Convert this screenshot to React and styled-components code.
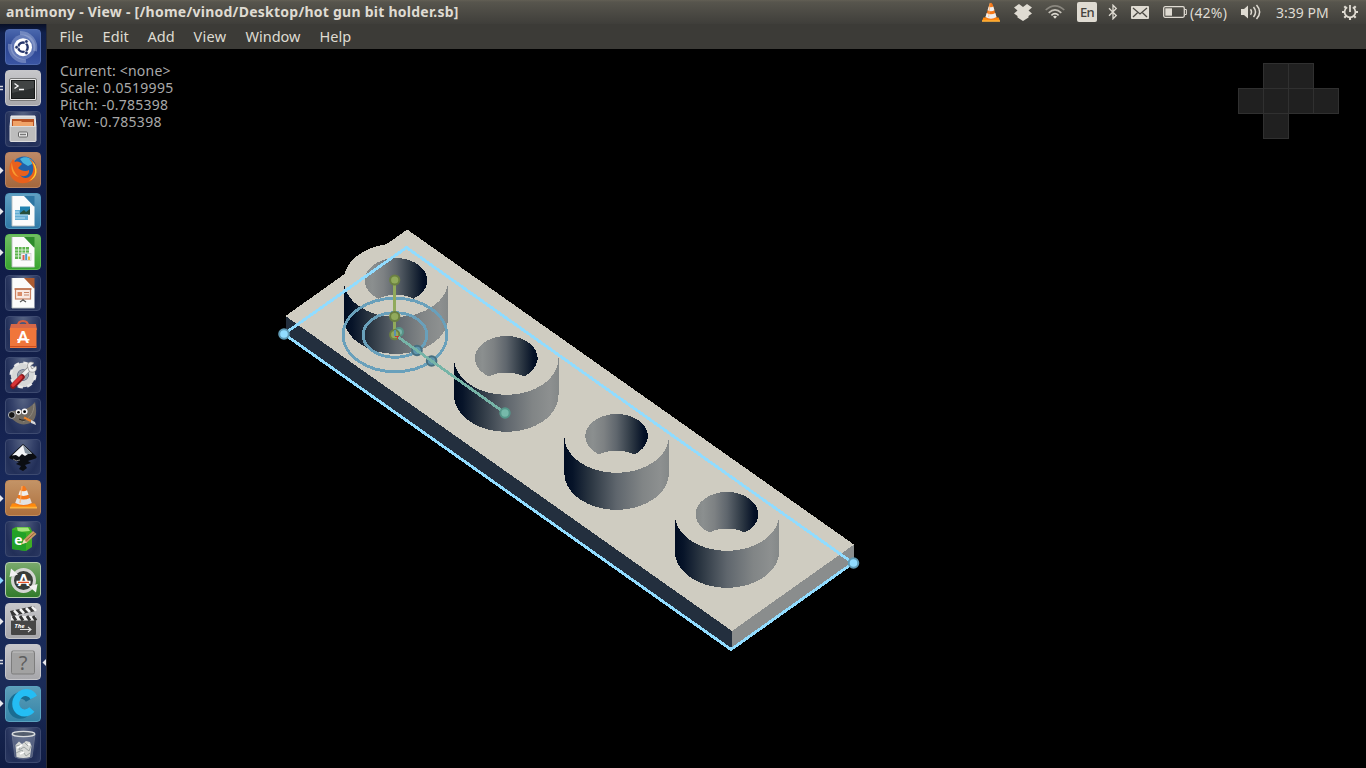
import React from 'react';
import styled, { createGlobalStyle } from 'styled-components';

const GlobalStyle = createGlobalStyle`
  * { box-sizing: border-box; }
  html, body { margin: 0; padding: 0; background: #000; overflow: hidden; }
  svg { display: block; flex: none; }
`;

const Desktop = styled.div`
  width: 1366px;
  height: 768px;
  display: flex;
  flex-direction: column;
  background: #000;
  font-family: 'Noto Sans', 'Open Sans', sans-serif;
  overflow: hidden;
`;

const TopPanel = styled.header`
  height: 24px;
  flex: none;
  display: flex;
  align-items: center;
  padding: 0 8px 0 6px;
  background: linear-gradient(#625f54 0, #57554d 2px, #3f3e3a 100%);
  color: #dfdbd2;
`;

const WindowTitle = styled.div`
  font-size: 14px;
  font-weight: 700;
  line-height: 24px;
  letter-spacing: 0.25px;
  white-space: nowrap;
  margin-right: auto;
`;

const Indicator = styled.div`
  width: ${(p) => p.$w}px;
  margin-left: ${(p) => p.$gap}px;
  height: 24px;
  flex: none;
  display: flex;
  align-items: center;
  font-size: 14px;
  letter-spacing: ${(p) => p.$spacing || 0}px;
  white-space: nowrap;
`;

const Keyboard = styled.span`
  width: 20px;
  height: 20px;
  border-radius: 2px;
  background: #dfdbd2;
  color: #45433e;
  font-size: 13px;
  line-height: 20px;
  text-align: center;
  letter-spacing: -0.6px;
  font-weight: 500;
`;

const Body = styled.div`
  flex: 1;
  display: flex;
  min-height: 0;
`;

const Launcher = styled.nav`
  width: 47px;
  flex: none;
  display: flex;
  flex-direction: column;
  gap: 5.04px;
  padding-top: 5px;
  border-right: 1px solid #292b33;
  background: linear-gradient(#080f25 0, #10204c 9px, #15265a 80px, #101d47 200px, #131f4a 370px, #192a5c 470px, #172859 560px, #1b2c58 660px, #101c43 744px);
`;

const LauncherRow = styled.div`
  height: 36px;
  flex: none;
  display: flex;
  align-items: center;
`;

const Tile = styled.div`
  width: 36px;
  height: 36px;
  flex: none;
  overflow: hidden;
  border-radius: 4px;
  border: 1px solid ${(p) => p.$edge};
  background: ${(p) => p.$bg};
`;

const Marker = styled.div`
  width: 5px;
  height: 36px;
  flex: none;
  display: flex;
  align-items: center;
`;

const AppWindow = styled.main`
  flex: 1;
  display: flex;
  flex-direction: column;
`;

const MenuBar = styled.div`
  height: 25px;
  flex: none;
  display: flex;
  padding-left: 12.5px;
  background: #3c3b37;
  color: #dfdbd2;
`;

const MenuItem = styled.div`
  width: ${(p) => p.$w}px;
  font-size: 14.5px;
  line-height: 25px;
  letter-spacing: ${(p) => p.$spacing || 0}px;
  white-space: nowrap;
`;

const Viewport = styled.section`
  flex: 1;
  display: grid;
  grid-template: 1fr / 1fr;
  background: #000;
  > * { grid-area: 1 / 1; }
`;

const CameraInfo = styled.div`
  z-index: 1;
  padding: 13px 0 0 13px;
  color: #a9a9a9;
  font-size: 14px;
  line-height: 17px;
  white-space: nowrap;
`;

const InfoLine = styled.div`
  letter-spacing: ${(p) => p.$spacing || 0}px;
`;

const ViewCube = styled.div`
  z-index: 1;
  justify-self: end;
  align-self: start;
  margin: 14px 27px 0 0;
  display: grid;
  grid-template-columns: repeat(4, 25px);
  grid-auto-rows: 25px;
  padding: 0 1px 1px 0;
`;

const Face = styled.div`
  width: 26px;
  height: 26px;
  grid-column: ${(p) => p.$col};
  grid-row: ${(p) => p.$row};
  background: #202020;
  border: 1px solid #303030;
`;

const cream = '#dfdbd2';

function Cone({ checker }) {
  return (
    <>
      <path d="M4 27 L6 22.5 H29 L31 27 Z" fill="#ff8a0c" />
      <path d="M4 25.8 H31 V27.5 H4 Z" fill="#ffb43c" />
      <path d="M15 7 Q17.5 2.5 20 7 L26 23 Q17.5 27 9 23 Z" fill="#f4781a" />
      <path d="M14 9.3 Q17.5 11 21 9.3 L22.6 13.8 Q17.5 16 12.4 13.8 Z" fill="#efefef" />
      <path d="M11 17 Q17.5 20 24 17 L25.8 22 Q17.5 26 9.2 22 Z" fill={checker ? '#e2e2e2' : '#efefef'} />
      <path d="M16 5 L14 22" stroke="#ffb066" strokeWidth="1.5" opacity=".7" />
    </>
  );
}

function Sheet({ fold, children }) {
  return (
    <>
      <path d="M6 2 H20 L28.5 12 V32 H6 Z" fill="#fbfbfb" />
      <path d="M6 2 V32 H28.5" fill="none" stroke="#b9c0c0" strokeWidth=".9" />
      <path d="M18 2 H28.5 V13 Z" fill={fold} />
      {children}
    </>
  );
}

const icons = {
  dash: (
    <>
      <circle cx="17" cy="17" r="12.5" fill="#9aabd6" opacity=".45" />
      <path d="M14 3 A15 15 0 0 1 29 21 M4 14 A15 15 0 0 0 20 31" fill="none" stroke="#b8c5e4" strokeWidth="4" opacity=".4" />
      <circle cx="17" cy="17.2" r="9" fill="#fff" />
      <circle cx="17" cy="17.2" r="4.7" fill="none" stroke="#26366b" strokeWidth="2.4" />
      <path d="M17 17.2 L9.5 17.2 M17 17.2 L20.8 10.7 M17 17.2 L20.8 23.7" stroke="#fff" strokeWidth="1.1" />
      <circle cx="17" cy="17.2" r="2.8" fill="#fff" />
      <g fill="#26366b" stroke="#fff" strokeWidth=".6"><circle cx="10.6" cy="17.2" r="1.8" /><circle cx="20.4" cy="11.5" r="1.8" /><circle cx="20.4" cy="22.9" r="1.8" /></g>
    </>
  ),
  terminal: (
    <>
      <rect x="3.5" y="7.5" width="27" height="22" rx="1.5" fill="#e9e9e9" stroke="#777" />
      <rect x="5.5" y="9.5" width="23" height="18" fill="#2b2e2e" stroke="#151717" />
      <path d="M6 10 H28 V17 L6 22 Z" fill="#505353" opacity=".6" />
      <path d="M8.5 12.5 L12 15 L8.5 17.5 M13 18.5 H18" fill="none" stroke="#f4f4f4" strokeWidth="1.4" />
    </>
  ),
  files: (
    <>
      <path d="M5 4 H29 L30 15 H4 Z" fill="#d8d8d8" stroke="#f0f0f0" />
      <rect x="6" y="7" width="22" height="8" fill="#b85222" />
      <path d="M7 9 H15 L16 10 H27 V15 H7 Z" fill="#f0a368" />
      <rect x="4" y="14.5" width="26" height="15" rx="1" fill="#bdbdbd" stroke="#dedede" />
      <rect x="12.5" y="20" width="9" height="5" rx="1" fill="#eee" stroke="#666" />
      <path d="M14 22.5 H20" stroke="#777" strokeWidth="1.5" />
    </>
  ),
  firefox: (
    <>
      <circle cx="18" cy="16" r="12.5" fill="#1f62ab" />
      <path d="M14 6 C19 2 26 5 28 10 L22 13 L17 10 Z" fill="#48b3dd" />
      <path d="M4 11 L7 6 L9 9 C12 8 14 9 16 11 L12 15 C15 18 20 19 23 17 C24 22 18 25 14 22 C19 29 29 23 27 13 C26 9 25 8 23 6 C33 10 33 23 25 28 C14 34 2 27 3.5 15 Z" fill="#e9601c" />
      <path d="M26 8 C33 14 32 25 23 28 C31 22 30 16 26 8 Z" fill="#ffcf32" />
      <path d="M6 9 C6 14 8 20 13 24 C7 23 4 16 6 9 Z" fill="#f89a30" />
    </>
  ),
  writer: (
    <Sheet fold="#2e76a3">
      <path d="M9 16 H22 V26 H9 Z" fill="#65aed3" />
      <rect x="14" y="12.5" width="10" height="8" fill="#2382b0" />
      <path d="M14 19 L18 16 L20 18 L24 15 V20.5 H14 Z" fill="#264e38" />
      <path d="M9 18 H13 M9 21 H22 M9 24 H19" stroke="#b9ddef" strokeWidth="1" />
    </Sheet>
  ),
  calc: (
    <Sheet fold="#2d8b2c">
      <rect x="9" y="12" width="14" height="12" fill="#5db44d" />
      <path d="M9 15 H23 M9 18 H23 M9 21 H23 M12.5 12 V24 M16 12 V24 M19.5 12 V24" stroke="#eaf6e7" strokeWidth=".8" />
      <rect x="15" y="18.5" width="10" height="7" fill="#f5f5f5" stroke="#bbb" strokeWidth=".5" />
      <path d="M17.5 25 V20" stroke="#d95f4f" strokeWidth="2" /><path d="M20.2 25 V19" stroke="#4699c9" strokeWidth="2" /><path d="M23 25 V21.5" stroke="#e8b53f" strokeWidth="2" />
    </Sheet>
  ),
  impress: (
    <Sheet fold="#ad5b31">
      <rect x="9.5" y="13" width="15" height="10" fill="#f8e9e2" stroke="#c98263" strokeWidth="1.2" />
      <path d="M8.5 13 H25.5" stroke="#bd6f4b" strokeWidth="1.6" />
      <rect x="11.5" y="16" width="4.5" height="4" fill="#d98c68" /><path d="M18 16.5 H23 M18 19 H23" stroke="#c88465" />
      <path d="M17 23 V24 L14 26 M17 24 L20 26" stroke="#555" strokeWidth="1.2" fill="none" />
    </Sheet>
  ),
  software: (
    <>
      <path d="M12 9 Q12 4 17 4 Q22 4 22 9" fill="none" stroke="#d85f3e" strokeWidth="2.2" />
      <path d="M5 7 H30 L31 13 H3.5 Z" fill="#d66848" />
      <path d="M4 11 H30.5 V31 H4 Z" fill="#f0763b" /><path d="M4 29.5 H30.5" stroke="#cf4f20" />
      <text x="17.2" y="26" textAnchor="middle" fontFamily="Lato, sans-serif" fontWeight="900" fontSize="16" fill="#fff">A</text>
      <path d="M11 22.7 H23.4" stroke="#fff" strokeWidth="1.6" />
    </>
  ),
  settings: (
    <>
      <circle cx="17" cy="17" r="9" fill="none" stroke="#d6d8d8" strokeWidth="6.5" />
      <circle cx="17" cy="17" r="12.2" fill="none" stroke="#e8e8e8" strokeWidth="2.6" strokeDasharray="5.2 4.38" />
      <circle cx="17" cy="17" r="5.3" fill="#9ca3ac" />
      <path d="M13 21 L25 9" stroke="#888" strokeWidth="5" /><path d="M13 21 L25 9" stroke="#efefef" strokeWidth="3.4" />
      <path d="M22 10 C20 4 25 3 28 5 L24.5 8 L26 11 L30 8 C32 13 27 16 23 13 Z" fill="#eee" stroke="#8d8d8d" strokeWidth=".7" />
      <path d="M7 28 L16 19" stroke="#8b171b" strokeWidth="5.5" strokeLinecap="round" /><path d="M7 27 L15 19" stroke="#d83437" strokeWidth="3.4" strokeLinecap="round" />
    </>
  ),
  gimp: (
    <>
      <path d="M6 12 C12 11 21 13 29 3 C32 16 29 24 21 25 C14 27 8 22 4 18 Z" fill="#716b62" />
      <path d="M28 5 C28 14 24 19 17 23" stroke="#8e897d" fill="none" />
      <ellipse cx="5.8" cy="16" rx="3.4" ry="3.4" fill="#171717" stroke="#b9bcc4" strokeWidth=".9" />
      <circle cx="12.5" cy="13" r="2.7" fill="#f8f8f8" /><circle cx="18.6" cy="12.5" r="3" fill="#f8f8f8" /><circle cx="12.5" cy="13.2" r="1.3" /><circle cx="18.6" cy="12.7" r="1.4" />
      <path d="M13 20 Q19 23 22 19" stroke="#292520" fill="none" />
      <path d="M18 18.5 L25 22" stroke="#e8832a" strokeWidth="2" /><path d="M25 21 L29 23 L30 26 L25 24 Z" fill="#d7d7d7" />
    </>
  ),
  inkscape: (
    <>
      <path d="M17 4 L30 16 Q32 18 28 19 L22 21 L25 23 L19 25 L21 28 L17 31 L13 29 L15 26 L10 24 L13 22 L5 19 Q2 18 4 16 Z" fill="#0b0d12" />
      <path d="M17 5 L26 13.5 L22 14 L19 16 L16 14 L13 17 L10 15 L6 15.5 Z" fill="#f4f5f7" />
      <path d="M17 5 L26 13.5 L22 14 L19 13 Z" fill="#84919d" />
      <path d="M7 19 Q10 22 14 20" stroke="#777" fill="none" />
    </>
  ),
  vlc: <Cone checker />,
  editor: (
    <>
      <path d="M6 7 L10 5 H24 L26 9 V25 L20 29 L6 27 Z" fill="#3fae24" /><path d="M11 5.5 H22 L24 9 L12 10 Z" fill="#a6e67c" />
      <path d="M6 7.5 L20 11 V29 L6 27 Z" fill="#22a128" />
      <text x="12.5" y="23" textAnchor="middle" fontFamily="Open Sans, sans-serif" fontWeight="700" fontSize="14" fill="#fff">e</text>
      <path d="M16 22 L18 17.5 L27 9 L30.5 12 L21 20.5 Z" fill="#c99a66" /><path d="M16 22 L18 17.5 L21 20.5 Z" fill="#f3e3bc" /><path d="M19.5 19 L29 10.5" stroke="#966034" />
    </>
  ),
  updater: (
    <>
      <circle cx="17.5" cy="17.5" r="11" fill="#373c38" stroke="#d4d6d3" strokeWidth="3" />
      <path d="M3.5 14 L5 5.5 L12 11.5 Z M31.5 21 L30 29.5 L23 23.5 Z" fill="#f2f2f2" />
      <text x="17.5" y="23" textAnchor="middle" fontFamily="Lato, sans-serif" fontWeight="900" fontSize="16" fill="#fff">A</text>
      <path d="M10.5 19.3 H24.5" stroke="#fff" strokeWidth="3" /><path d="M12 19.3 H23" stroke="#e75225" strokeWidth="1.2" />
    </>
  ),
  clapper: (
    <>
      <path d="M4 7 L28 2 L30 7 L6 12 Z" fill="#373737" /><path d="M8 6.4 L12 10.6 M14 5 L18 9.3 M20 4 L24 8.2 M26 2.6 L30 6.8" stroke="#f4f4f4" strokeWidth="2.6" />
      <rect x="5" y="12" width="25" height="19" rx="1" fill="#464646" /><rect x="5" y="12" width="25" height="4.5" fill="#efefef" />
      <path d="M7 12 L10 16.5 M14 12 L17 16.5 M21 12 L24 16.5 M27 12 L30 16.5" stroke="#333" strokeWidth="3" />
      <text x="8.5" y="24" fontFamily="Open Sans, sans-serif" fontWeight="700" fontStyle="italic" fontSize="6" fill="#fff">The</text>
      <path d="M14 25.5 H25 M22 23 L25 25.5 L22 28" stroke="#ddd" strokeWidth="1.1" fill="none" />
    </>
  ),
  unknown: (
    <>
      <rect x="5.5" y="6" width="23" height="23" rx="1.5" fill="#a2a2a2" stroke="#7d7d7d" /><path d="M7 7 H27" stroke="#c4c4c4" />
      <text x="17.2" y="25" textAnchor="middle" fontFamily="Noto Sans, sans-serif" fontSize="20" fill="#5e5e5e">?</text>
    </>
  ),
  cura: (
    <g fill="none" transform="skewX(-4)">
      <path d="M26.5 11.5 A9.3 10 0 1 0 25.5 23.5" stroke="#1a6d92" strokeWidth="7" transform="translate(-2.5 1.5)" />
      <path d="M28.5 10.5 A9.5 10.2 0 1 0 27.5 22.5" stroke="#24bdf4" strokeWidth="7" />
    </g>
  ),
  trash: (
    <>
      <path d="M6 6 H29 L26 29 Q17 33 9 29 Z" fill="#a9b2bd" opacity=".32" stroke="#d0d4d8" />
      <ellipse cx="17.5" cy="6" rx="11.3" ry="2.6" fill="#535d6e" stroke="#d8dbde" strokeWidth="1.4" />
      <path d="M9.5 17 L13 13.5 L16 16 L20 13 L24 14 L25.5 18 L24 29 Q17 31 10.5 29 Z" fill="#d7d9d7" />
      <path d="M10 18 L14 17 L13 22 L18 19 L23 23 L25 18 M10 25 L16 22 L20 28 L24 25 M18 14 L22 18" stroke="#9fa5a5" fill="none" strokeWidth="1" />
      <path d="M11 20 L16 17 M14 26 L18 24 M22 16 L24 17" stroke="#fff" strokeWidth="1.8" />
    </>
  ),
};

const glass = 'radial-gradient(ellipse at 50% -10%, #5a6785 0, #35426a 45%, #222f58 75%, #2a3760 100%)';
const silver = 'linear-gradient(#c6c6c9, #a7a7ab)';
const glassEdge = '#3d4a70';

const launcherItems = [
  { icon: 'dash', bg: 'linear-gradient(#4a67ad, #2b4592 50%, #3a55a3)', edge: '#4f6aae' },
  { icon: 'terminal', bg: silver, edge: '#c6c6ca', run: 'double' },
  { icon: 'files', bg: glass, edge: glassEdge },
  { icon: 'firefox', bg: 'linear-gradient(#bd8967, #a4683d)', edge: '#b88462', run: 'arrow' },
  { icon: 'writer', bg: 'linear-gradient(#609fc2, #3179a7)', edge: '#4f96bc', run: 'arrow' },
  { icon: 'calc', bg: 'linear-gradient(#71bd63, #38a52f)', edge: '#5fc052', run: 'arrow' },
  { icon: 'impress', bg: glass, edge: glassEdge },
  { icon: 'software', bg: glass, edge: glassEdge },
  { icon: 'settings', bg: glass, edge: glassEdge },
  { icon: 'gimp', bg: glass, edge: glassEdge },
  { icon: 'inkscape', bg: glass, edge: glassEdge },
  { icon: 'vlc', bg: 'linear-gradient(#c39366, #ad703d)', edge: '#c08c5e', run: 'arrow' },
  { icon: 'editor', bg: glass, edge: glassEdge },
  { icon: 'updater', bg: 'linear-gradient(#79a96c, #327c2b)', edge: '#b5cdae', run: 'arrow', tint: '#8dd7ff' },
  { icon: 'clapper', bg: silver, edge: '#c6c6ca', run: 'arrow' },
  { icon: 'unknown', bg: silver, edge: '#c6c6ca', run: 'double', active: true },
  { icon: 'cura', bg: 'linear-gradient(#5c9eb8, #3584a8)', edge: '#5ba3c0', run: 'arrow' },
  { icon: 'trash', bg: glass, edge: glassEdge },
];

function LauncherItem({ item }) {
  return (
    <LauncherRow>
      <Marker>
        {item.run === 'arrow' && <svg width="4" height="7"><path d="M0 0 L3.5 3.5 L0 7 Z" fill={item.tint || '#e8e8ec'} /></svg>}
        {item.run === 'double' && <svg width="4" height="7"><path d="M0 1.5 H3 M0 4.5 H3" stroke="#d8d8df" strokeWidth="1.6" /></svg>}
      </Marker>
      <Tile $bg={item.bg} $edge={item.edge}>
        <svg width="34" height="34" viewBox="0 0 34 34">{icons[item.icon]}</svg>
      </Tile>
      <Marker>
        {item.active && <svg width="5" height="7"><path d="M5 0 L1.5 3.5 L5 7 Z" fill="#e8e8ec" /></svg>}
      </Marker>
    </LauncherRow>
  );
}

function Holder({ cx, cy }) {
  const seam = cy + 18.3;
  return (
    <g>
      <path d={`M${cx - 52.2} ${cy} V${cy + 37} A52.2 36.7 0 0 0 ${cx + 52.2} ${cy + 37} V${cy} Z`} fill="url(#outer)" />
      <ellipse cx={cx} cy={cy} rx="52.2" ry="36.7" fill="#cfccc1" />
      <path d={`M${cx - 17.7} ${seam} A31.3 22.2 0 1 1 ${cx + 17.7} ${seam} A31.3 22.2 0 0 0 ${cx - 17.7} ${seam} Z`} fill="url(#inner)" />
    </g>
  );
}

function Handle({ x, y, fill, ring, r = 4 }) {
  return <circle cx={x} cy={y} r={r} fill={fill} stroke={ring} strokeWidth="2" shapeRendering="geometricPrecision" />;
}

function Model() {
  return (
    <svg width="1319" height="719" viewBox="47 49 1319 719" shapeRendering="crispEdges">
      <defs>
        <linearGradient id="outer">
          <stop offset="0" stopColor="#000c22" /><stop offset=".08" stopColor="#071429" /><stop offset=".25" stopColor="#2b3642" />
          <stop offset=".5" stopColor="#5f666d" /><stop offset=".75" stopColor="#818586" /><stop offset=".92" stopColor="#8d9090" /><stop offset="1" stopColor="#858989" />
        </linearGradient>
        <linearGradient id="inner">
          <stop offset="0" stopColor="#858989" /><stop offset=".12" stopColor="#8b8f8f" /><stop offset=".3" stopColor="#7d8183" />
          <stop offset=".5" stopColor="#5f666d" /><stop offset=".75" stopColor="#2b3642" /><stop offset=".93" stopColor="#051126" /><stop offset="1" stopColor="#000c22" />
        </linearGradient>
      </defs>
      <path d="M407.2 229.5 L854 544.6 L732 631 L285.5 316 Z" fill="#cfccc1" />
      <path d="M285.5 316 L732 631 V649 L285.5 334 Z" fill="#232f3e" />
      <path d="M854 544.6 L732 631 V649 L854 563 Z" fill="#8a8d8d" />
      <Holder cx={396} cy={280.3} />
      <Holder cx={506.3} cy={358.2} />
      <Holder cx={616.6} cy={436.2} />
      <Holder cx={727} cy={514.2} />
      <path d="M284 334 L406.5 247.5 L853 563 L731 649.5 Z" fill="none" stroke="#91dcff" strokeWidth="2.9" />
      <g fill="none" stroke="#69a0bb" strokeWidth="2.9">
        <ellipse cx="395" cy="335" rx="51.8" ry="36.7" />
        <ellipse cx="395" cy="335" rx="31.8" ry="22.3" />
      </g>
      <Handle x={284} y={334} fill="#91dcff" ring="#609bb6" r={4.8} />
      <Handle x={853.5} y={563} fill="#91dcff" ring="#609bb6" r={4.8} />
      <path d="M394.5 280 V335" stroke="#91aa5b" strokeWidth="3" />
      <Handle x={394.7} y={280} fill="#91aa5b" ring="#6b8042" r={4.6} />
      <Handle x={394.7} y={316.5} fill="#91aa5b" ring="#6b8042" r={4.6} />
      <Handle x={399} y={332} fill="#79b5aa" ring="#579489" r={4} />
      <Handle x={394.7} y={334.7} fill="#91aa5b" ring="#6b8042" r={4.6} />
      <path d="M394.8 330 V335.5" stroke="#5b91ae" strokeWidth="2" />
      <Handle x={417} y={350.5} fill="#5e96ae" ring="#476f80" r={4.8} />
      <Handle x={431.6} y={361} fill="#5e96ae" ring="#476f80" r={4.8} />
      <path d="M398 337 L505 413" stroke="#76b4a7" strokeWidth="2.8" />
      <path d="M395 336.5 H399 M397.5 336 V339" stroke="#c43b37" strokeWidth="1.3" />
      <Handle x={505} y={413} fill="#76b9aa" ring="#55978a" r={4.7} />
    </svg>
  );
}

const menus = [
  ['File', 43, 0.2], ['Edit', 45, 0.1], ['Add', 46, 0], ['View', 52, 0.3], ['Window', 74, 0], ['Help', 50, 0],
];
const faces = [[2, 1], [3, 1], [1, 2], [2, 2], [3, 2], [4, 2], [2, 3]];

export default function App() {
  return (
    <Desktop>
      <GlobalStyle />
      <TopPanel>
        <WindowTitle>antimony - View - [/home/vinod/Desktop/hot gun bit holder.sb]</WindowTitle>
        <Indicator $w={18} $gap={0}><svg width="18" height="21" viewBox="4 4 27 25" preserveAspectRatio="none"><Cone /></svg></Indicator>
        <Indicator $w={18} $gap={14}>
          <svg width="18" height="17" viewBox="0 0 18 17"><path d="M5 0 L9 3 L13 0 L18 3.5 L14.5 6.5 L18 9.5 L14.5 12 V13.5 L9 17 L3.5 13.5 V12 L0 9.5 L3.5 6.5 L0 3.5 Z" fill={cream} /></svg>
        </Indicator>
        <Indicator $w={20} $gap={13}>
          <svg width="20" height="14" viewBox="0 0 20 14" fill="none" strokeWidth="1.6">
            <path d="M.7 5 Q10 -3.3 19.3 5" stroke="#8a877f" /><path d="M3.7 7.8 Q10 1.8 16.3 7.8" stroke="#c6c2b9" /><path d="M6.4 10.3 Q10 7 13.6 10.3" stroke={cream} /><path d="M8 11.6 Q10 10 12 11.6 L10 13.8 Z" fill={cream} />
          </svg>
        </Indicator>
        <Indicator $w={20} $gap={12}><Keyboard>En</Keyboard></Indicator>
        <Indicator $w={10} $gap={11}>
          <svg width="10" height="16" viewBox="0 0 10 16"><path d="M1 4.3 L8.3 11.5 L5 14.8 V1.2 L8.3 4.5 L1 11.7" fill="none" stroke={cream} strokeWidth="1.3" /></svg>
        </Indicator>
        <Indicator $w={18} $gap={13}>
          <svg width="18" height="13" viewBox="0 0 18 13"><rect width="18" height="13" rx="1" fill={cream} /><path d="M2 2 L9 8 L16 2 M2 11 L6.5 6.7 M16 11 L11.5 6.7" fill="none" stroke="#4b4943" strokeWidth="1.3" /></svg>
        </Indicator>
        <Indicator $w={24} $gap={14}>
          <svg width="24" height="12" viewBox="0 0 24 12"><rect x=".7" y=".7" width="20.6" height="10.6" rx="1.5" fill="none" stroke={cream} strokeWidth="1.3" /><path d="M2.3 2.3 H9 V9.7 H2.3 Z" fill={cream} /><path d="M22 3.5 H23.4 V8.5 H22" stroke={cream} fill="none" /></svg>
        </Indicator>
        <Indicator $w={38} $gap={3} $spacing={0.2}>(42%)</Indicator>
        <Indicator $w={20} $gap={13}>
          <svg width="20" height="16" viewBox="0 0 20 16"><path d="M0 5 H3 L7 1.5 V14.5 L3 11 H0 Z" fill={cream} /><path d="M9.5 5.3 Q11.5 8 9.5 10.7 M12.5 3 Q16.5 8 12.5 13 M15.5 1 Q21.8 8 15.5 15" fill="none" stroke={cream} strokeWidth="1.5" /></svg>
        </Indicator>
        <Indicator $w={53} $gap={15} $spacing={0}>3:39 PM</Indicator>
        <Indicator $w={16} $gap={13}>
          <svg width="16" height="16" viewBox="0 0 16 16" fill="none" stroke={cream}>
            <path d="M5.2 3.3 A5.4 5.4 0 1 0 10.8 3.3" strokeWidth="1.7" /><path d="M8 1 V8" strokeWidth="1.8" />
            <path d="M0 8 H2.5 M13.5 8 H16 M8 13.5 V16 M2.3 2.3 L4.2 4.2 M13.7 2.3 L11.8 4.2 M2.3 13.7 L4.2 11.8 M13.7 13.7 L11.8 11.8" strokeWidth="2.1" />
          </svg>
        </Indicator>
      </TopPanel>
      <Body>
        <Launcher>{launcherItems.map((item) => <LauncherItem key={item.icon} item={item} />)}</Launcher>
        <AppWindow>
          <MenuBar>{menus.map(([name, w, s]) => <MenuItem key={name} $w={w} $spacing={s}>{name}</MenuItem>)}</MenuBar>
          <Viewport>
            <Model />
            <CameraInfo>
              <InfoLine $spacing={0.22}>Current: &lt;none&gt;</InfoLine>
              <InfoLine $spacing={0.28}>Scale: 0.0519995</InfoLine>
              <InfoLine $spacing={0.26}>Pitch: -0.785398</InfoLine>
              <InfoLine $spacing={0.28}>Yaw: -0.785398</InfoLine>
            </CameraInfo>
            <ViewCube>{faces.map(([c, r]) => <Face key={`${c}-${r}`} $col={c} $row={r} />)}</ViewCube>
          </Viewport>
        </AppWindow>
      </Body>
    </Desktop>
  );
}
